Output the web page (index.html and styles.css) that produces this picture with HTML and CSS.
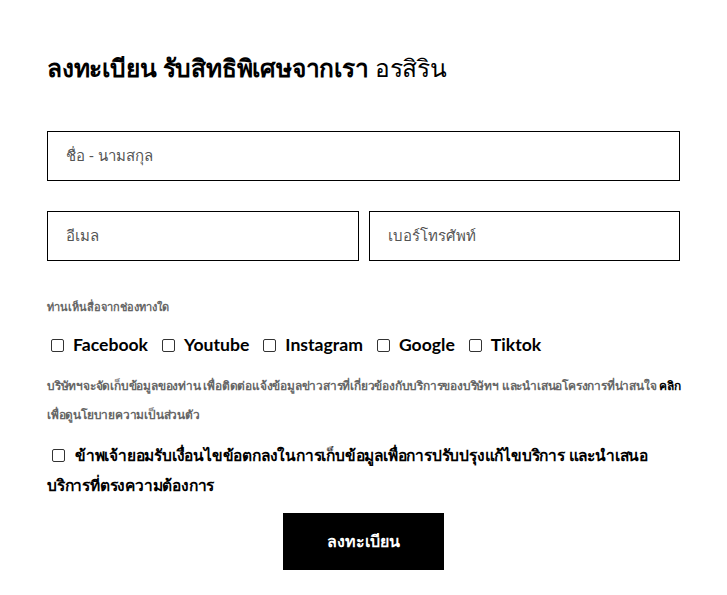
FILE: index.html
```html
<!DOCTYPE html>
<html lang="th">
<head>
<meta charset="utf-8">
<link rel="stylesheet" href="styles.css">
</head>
<body>
<form class="form">
  <h1 class="title"><b>ลงทะเบียน รับสิทธิพิเศษจากเรา</b> <span class="light">อรสิริน</span></h1>
  <div class="field full"><span class="ph">ชื่อ - นามสกุล</span></div>
  <div class="row">
    <div class="field"><span class="ph">อีเมล</span></div>
    <div class="field"><span class="ph">เบอร์โทรศัพท์</span></div>
  </div>
  <p class="label">ท่านเห็นสื่อจากช่องทางใด</p>
  <div class="channels">
    <label class="opt"><span class="box"></span>Facebook</label>
    <label class="opt"><span class="box"></span>Youtube</label>
    <label class="opt"><span class="box"></span>Instagram</label>
    <label class="opt"><span class="box"></span>Google</label>
    <label class="opt"><span class="box"></span>Tiktok</label>
  </div>
  <p class="privacy">บริษัทฯจะจัดเก็บข้อมูลของท่าน เพื่อติดต่อแจ้งข้อมูลข่าวสารที่เกี่ยวข้องกับบริการของบริษัทฯ และนำเสนอโครงการที่น่าสนใจ <b>คลิก</b><br>เพื่อดูนโยบายความเป็นส่วนตัว</p>
  <p class="consent"><span class="box"></span>ข้าพเจ้ายอมรับเงื่อนไขข้อตกลงในการเก็บข้อมูลเพื่อการปรับปรุงแก้ไขบริการ และนำเสนอ บริการที่ตรงความต้องการ</p>
  <div class="actions"><button type="button" class="submit">ลงทะเบียน</button></div>
</form>
</body>
</html>
```

FILE: styles.css
```css
* { box-sizing: border-box; }
body {
  margin: 0;
  background: #fff;
  font-family: "Noto Sans", "Liberation Sans", sans-serif;
  color: #000;
}
.form {
  width: 633px;
  margin-left: 47px;
  padding-top: 52px;
}
.title {
  margin: 0 0 47px;
  font-size: 24.5px;
  line-height: 32px;
  font-weight: 400;
  letter-spacing: -0.2px;
}
.title b { font-weight: 700; }
.title .light { font-weight: 300; }
.field {
  height: 50px;
  border: 1.5px solid #000;
  display: flex;
  align-items: center;
  padding-left: 18px;
  font-size: 15px;
  color: #555;
}
.full { margin-bottom: 30px; }
.row {
  display: grid;
  grid-template-columns: 1fr 1fr;
  gap: 10px;
}
.label {
  margin: 38px 0 0;
  font-size: 11px;
  line-height: 16px;
  font-weight: 700;
  color: #666;
}
.channels {
  display: flex;
  gap: 14px;
  margin-top: 18px;
  padding-left: 4px;
  font-family: Lato, "Noto Sans", sans-serif;
}
.opt {
  display: flex;
  align-items: center;
  font-size: 17.6px;
  font-weight: 700;
  line-height: 24px;
}
.box {
  display: inline-block;
  width: 13px;
  height: 13px;
  border: 1px solid #333;
  border-radius: 2px;
  margin-right: 9px;
  flex: none;
}
.privacy {
  margin: 14px 0 0;
  font-size: 11.9px;
  line-height: 29px;
  color: #666;
  font-weight: 600;
  letter-spacing: -0.2px;
  white-space: nowrap;
}
.privacy b { color: #000; }
.consent {
  margin: 11px 0 0;
  font-size: 15.5px;
  line-height: 30px;
  font-weight: 600;
  letter-spacing: -0.2px;
}
.consent .box { margin-left: 5px; margin-right: 10px; vertical-align: -1px; }
.actions {
  display: flex;
  justify-content: center;
  margin-top: 13px;
}
.submit {
  width: 161px;
  height: 57px;
  background: #000;
  color: #fff;
  border: 0;
  font-family: inherit;
  font-size: 16px;
  font-weight: 700;
}
```
